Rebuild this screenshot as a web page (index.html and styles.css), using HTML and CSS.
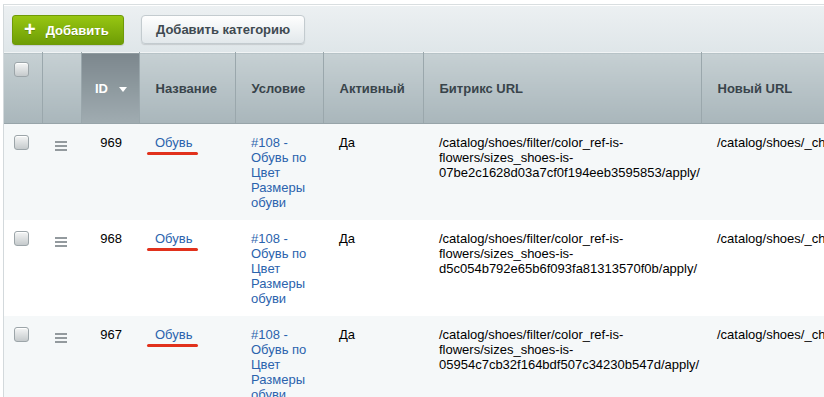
FILE: index.html
```html
<!DOCTYPE html>
<html>
<head>
<meta charset="utf-8">
<link rel="stylesheet" href="styles.css">
<title>Ссылки</title>
</head>
<body>
<div class="panel">
	<div class="toolbar">
		<a class="btn btn-green" href="#"><span class="plus">+</span>Добавить</a>
		<a class="btn" href="#">Добавить категорию</a>
	</div>

	<table class="list">
		<colgroup>
			<col class="c-check"><col class="c-drag"><col class="c-id"><col class="c-name">
			<col class="c-cond"><col class="c-act"><col class="c-url"><col class="c-new">
		</colgroup>
		<tr class="head">
			<th class="h-check"><span class="cb"></span></th>
			<th></th>
			<th class="h-id sorted">ID <span class="arrow"></span></th>
			<th>Название</th>
			<th>Условие</th>
			<th>Активный</th>
			<th>Битрикс URL</th>
			<th>Новый URL</th>
		</tr>
		<tr class="row">
			<td class="t-check"><span class="cb"></span></td>
			<td class="t-drag"><svg width="12" height="10" viewBox="0 0 12 10"><rect y="0" width="12" height="2"/><rect y="4" width="12" height="2"/><rect y="8" width="12" height="2"/></svg></td>
			<td class="t-id">969</td>
			<td><a class="mark" href="#">Обувь</a></td>
			<td><a href="#">#108 - Обувь по Цвет Размеры обуви</a></td>
			<td>Да</td>
			<td>/catalog/shoes/filter/color_ref-is-flowers/sizes_shoes-is-07be2c1628d03a7cf0f194eeb3595853/apply/</td>
			<td class="t-new">/catalog/shoes/_chernye-tufli/</td>
		</tr>
		<tr class="row">
			<td class="t-check"><span class="cb"></span></td>
			<td class="t-drag"><svg width="12" height="10" viewBox="0 0 12 10"><rect y="0" width="12" height="2"/><rect y="4" width="12" height="2"/><rect y="8" width="12" height="2"/></svg></td>
			<td class="t-id">968</td>
			<td><a class="mark" href="#">Обувь</a></td>
			<td><a href="#">#108 - Обувь по Цвет Размеры обуви</a></td>
			<td>Да</td>
			<td>/catalog/shoes/filter/color_ref-is-flowers/sizes_shoes-is-d5c054b792e65b6f093fa81313570f0b/apply/</td>
			<td class="t-new">/catalog/shoes/_chernye-botinki/</td>
		</tr>
		<tr class="row">
			<td class="t-check"><span class="cb"></span></td>
			<td class="t-drag"><svg width="12" height="10" viewBox="0 0 12 10"><rect y="0" width="12" height="2"/><rect y="4" width="12" height="2"/><rect y="8" width="12" height="2"/></svg></td>
			<td class="t-id">967</td>
			<td><a class="mark" href="#">Обувь</a></td>
			<td><a href="#">#108 - Обувь по Цвет Размеры обуви</a></td>
			<td>Да</td>
			<td>/catalog/shoes/filter/color_ref-is-flowers/sizes_shoes-is-05954c7cb32f164bdf507c34230b547d/apply/</td>
			<td class="t-new">/catalog/shoes/_chernye-sapogi/</td>
		</tr>
	</table>
</div>
</body>
</html>
```

FILE: styles.css
```css
body{margin:0; overflow:hidden; background:#fff; font-family:"Liberation Sans", Arial, sans-serif; font-size:13px; color:#000;}

.panel{margin:4px 0 0 3px; width:1000px; border-top:1px solid #d9dee0; border-left:1px solid #d3d9dc;}

/* toolbar */
.toolbar{height:47px; box-sizing:border-box; padding:9px 0 0 8px; display:flex; gap:17px; align-items:flex-start;
	background:linear-gradient(#ecf0f2, #dfe6e9); border-top:1px solid #fff;}
.btn{display:inline-flex; align-items:center; height:29px; box-sizing:border-box; padding:0 14px; border-radius:4px;
	border:1px solid #c3cbcf; background:linear-gradient(#fefefe, #e2e8eb); box-shadow:0 1px 1px rgba(0,0,0,.12);
	font-weight:bold; font-size:13px; color:#3f4a51; text-decoration:none;}
.btn-green{height:30px; width:112px; padding:0 0 0 11px; border:1px solid #6f9a08; border-radius:3px;
	background:linear-gradient(#97c612, #6e9d05); color:#fff; text-shadow:0 1px 0 rgba(0,0,0,.2);}
.plus{font-size:20px; font-weight:bold; margin-right:10px; line-height:1; position:relative; top:-1px;}

/* table */
.list{border-collapse:collapse; table-layout:fixed; width:997px;}
.c-check{width:38px} .c-drag{width:39px} .c-id{width:58px} .c-name{width:96px}
.c-cond{width:88px} .c-act{width:100px} .c-url{width:278px} .c-new{width:300px}

.head th{height:71px; padding:0 0 0 16px; box-sizing:border-box; text-align:left; font-weight:bold; color:#39444b;
	background:linear-gradient(#c6d0d3, #a9b6bb); border-left:1px solid #dde4e6; border-right:1px solid #9aa7ac;
	border-top:1px solid #f1f4f5; border-bottom:1px solid #97a4a9;}
.head th:first-child{border-left:none;}
.head .h-check{vertical-align:top; padding:9px 0 0 10px;}
.head .sorted{background:linear-gradient(#7c878d, #a0acb1); color:#fff; text-align:right; padding:0 12px 0 0;}
.arrow{display:inline-block; width:0; height:0; margin-left:7px; border-left:4px solid transparent; border-right:4px solid transparent;
	border-top:5px solid #fff; vertical-align:middle;}

.row td{vertical-align:top; padding:11px 4px 10px 16px; line-height:15px; background:#f5f8f9;}
.row:nth-child(odd) td{background:#fff;}
.row .t-check{padding-left:10px;}
.row .t-drag{padding:15px 0 0 13px; fill:#939a9e;}
.row .t-id{text-align:right; padding-right:17px; padding-left:0;}
.row .t-new{white-space:nowrap;}
.row a{color:#2b63ad; text-decoration:none;}

.cb{display:inline-block; width:15px; height:15px; box-sizing:border-box; border:1px solid #9ca5a9; border-radius:3px;
	background:linear-gradient(#f5f6f6, #c5cacc); box-shadow:inset 0 1px 0 #fff; vertical-align:top;}

/* red mark under name */
.mark{position:relative;}
.mark::after{content:""; position:absolute; left:-8px; right:-6px; bottom:-5px; height:3px; border-radius:2px; background:#e1311c;}
```
